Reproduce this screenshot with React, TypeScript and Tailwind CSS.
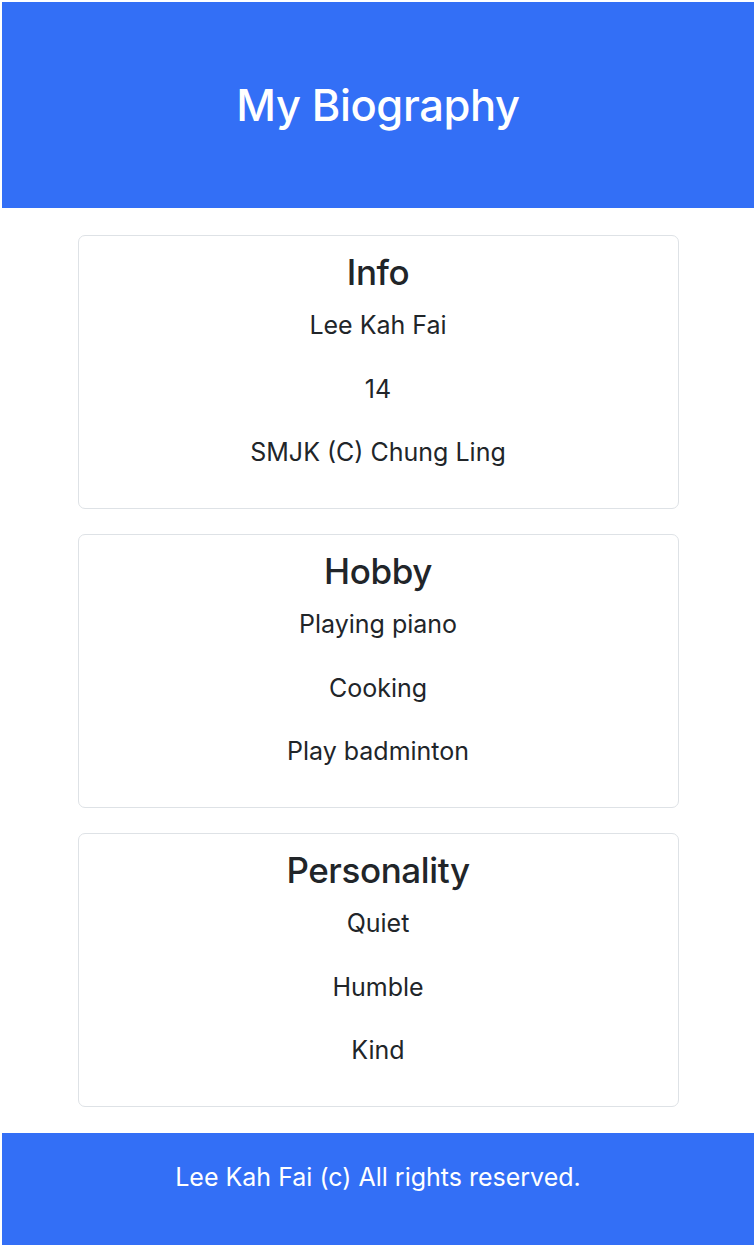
import React from "react";

const sections = [
  { title: "Info", items: ["Lee Kah Fai", "14", "SMJK (C) Chung Ling"] },
  { title: "Hobby", items: ["Playing piano", "Cooking", "Play badminton"] },
  { title: "Personality", items: ["Quiet", "Humble", "Kind"] },
];

export default function App() {
  return (
    <div
      className="bg-white p-[2px] text-[#212529]"
      style={{ fontFamily: "Inter, 'Noto Sans', sans-serif" }}
    >
      <header className="h-[206px] bg-[#336ff6] flex items-center justify-center">
        <h1 className="text-white text-[43.5px] leading-[1.2] font-medium tracking-[-0.4px]">My Biography</h1>
      </header>
      <main className="flex flex-col items-center gap-[25px] pt-[27px] pb-[26px]">
        {sections.map((s) => (
          <section
            key={s.title}
            className="w-[601px] h-[274px] border border-[#dee2e6] rounded-[7px] text-center pt-[15px]"
          >
            <h2 className="text-[35px] leading-[43px] font-medium tracking-[-0.4px]">{s.title}</h2>
            <div className="mt-[13px] flex flex-col gap-[27.5px]">
              {s.items.map((it) => (
                <p key={it} className="text-[25px] leading-[36px]">
                  {it}
                </p>
              ))}
            </div>
          </section>
        ))}
      </main>
      <footer className="h-[112px] bg-[#336ff6] flex justify-center pt-[26px]">
        <p className="text-white text-[25px] leading-[36px]">Lee Kah Fai (c) All rights reserved.</p>
      </footer>
    </div>
  );
}
